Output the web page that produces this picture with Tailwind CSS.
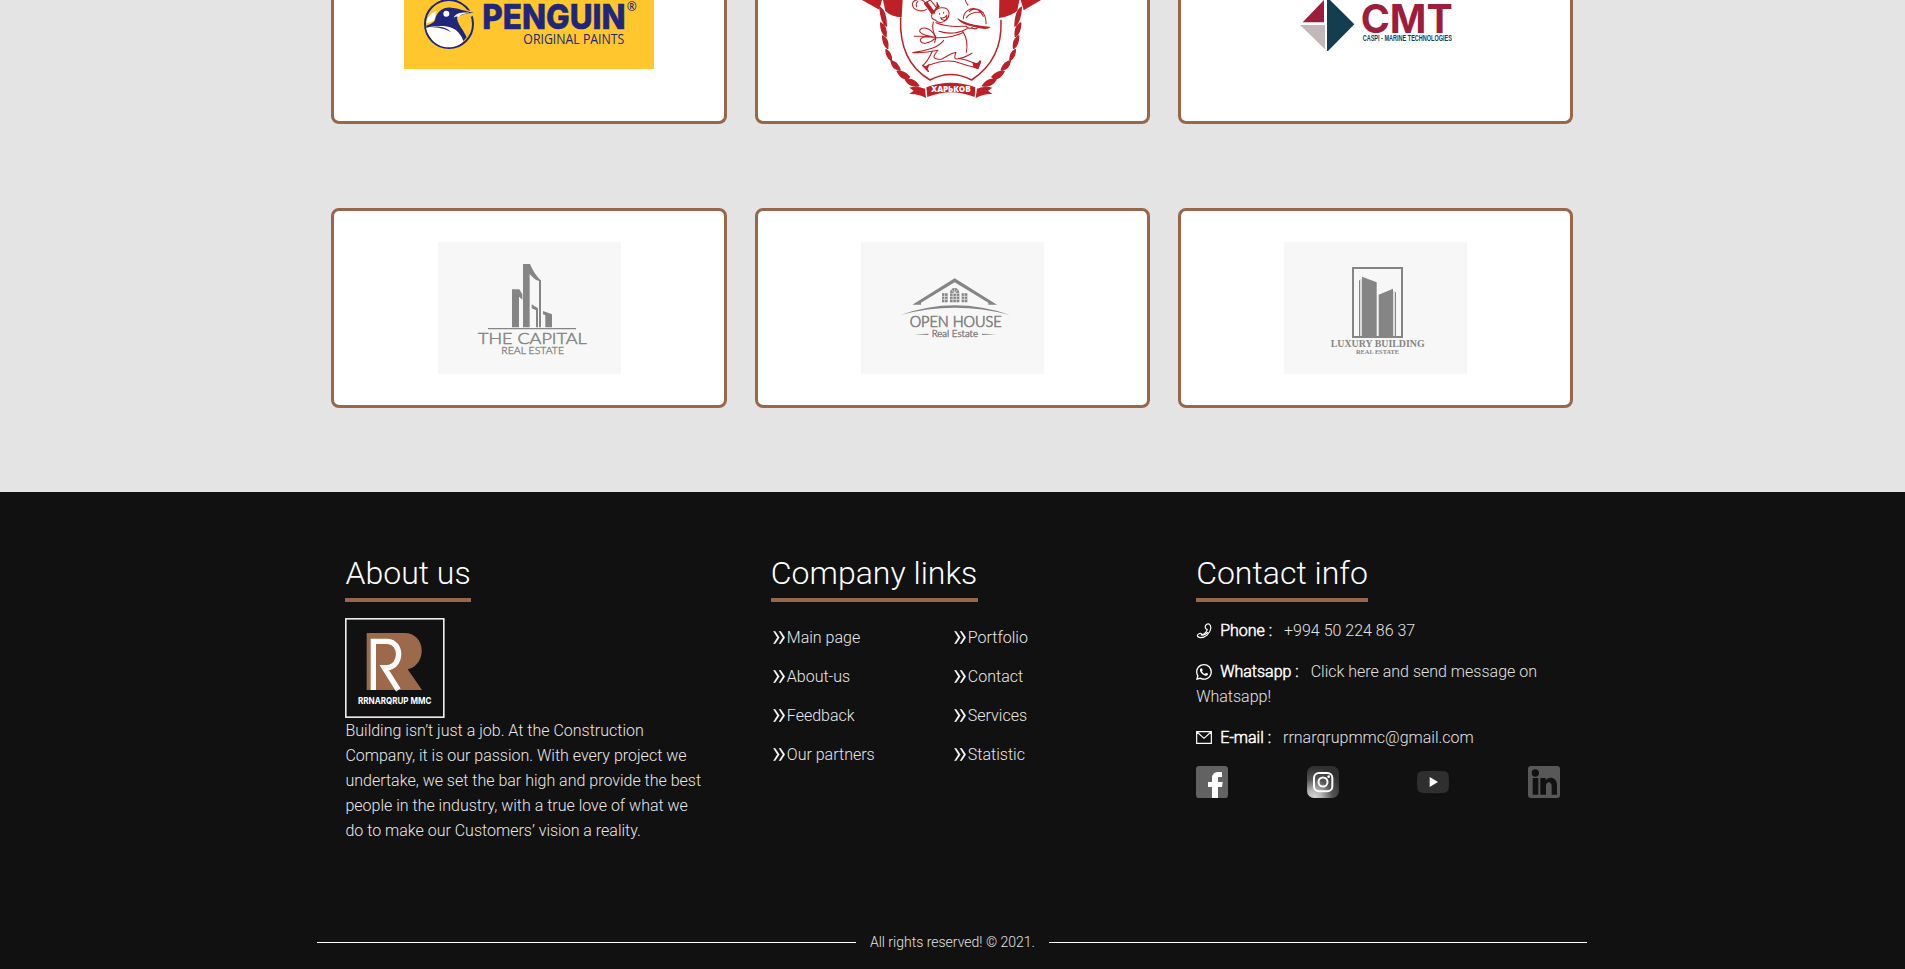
<!DOCTYPE html>
<html lang="en">
<head>
<meta charset="utf-8">
<title>Our partners</title>
<script src="https://cdn.jsdelivr.net/npm/@tailwindcss/browser@4"></script>
</head>
<body class="h-[969px] overflow-hidden bg-[#e4e4e4] font-['Roboto',sans-serif] font-light text-white">
<svg class="hidden">
  <symbol id="chev" viewBox="0 0 36 40"><path d="M1 1h5l13 19L6 39H1l12-19zM18 1h5l13 19-13 19h-5l12-19z" fill="#fff" stroke="#fff"/></symbol>
</svg>
<main class="ml-[317.4px] flex h-[492px] w-[1270px] flex-col gap-[84px]">
  <div class="grid h-[124px] grid-cols-3">
    <div class="mx-[14px] flex items-start justify-center rounded-b-lg border-3 border-t-0 border-[#98674b] bg-white">
      <svg class="h-[69px] w-[250px]" viewBox="252 0 750 207">
        <rect x="252" width="750" height="207" fill="#ffc62d"/>
        <circle cx="387" cy="72" r="72" fill="none" stroke="#20267b" stroke-width="6"/>
        <path d="M440 30L468 36 455 50 440 44z" fill="#ffc62d"/>
        <path d="M319 78C342 74 372 74 388 79C410 84 428 99 432 120C412 152 352 149 330 110C322 99 318 88 319 78z" fill="#fff"/>
        <path d="M319 77C320 77 342 70 345 60C350 34 370 21 393 23C412 24 426 31 462 38C440 40 421 43 411 53C412 72 430 88 440 112L430 123C420 94 400 80 370 78C350 77 334 78 319 84z" fill="#20267b"/>
        <path d="M319 70C321 52 331 40 350 32C346 40 348 52 341 61C334 67 326 68 319 70z" fill="#fff"/>
        <path d="M331 81C356 76 382 82 393 97C377 86 355 82 331 81z" fill="#20267b"/>
        <circle cx="379" cy="41" r="9" fill="#fff"/>
        <path d="M401 53C407 40 423 37 448 38C425 42 420 46 415 52C411 48 407 50 401 53z" fill="#fff"/>
        <text x="487" y="86" textLength="430" lengthAdjust="spacingAndGlyphs" font-family="Inter" font-weight="800" font-size="102" fill="#20267b" stroke="#20267b" stroke-width="1.5">PENGUIN</text>
        <text x="610" y="131" textLength="303" lengthAdjust="spacingAndGlyphs" font-family="Open Sans" font-weight="400" font-size="41" fill="#20267b">ORIGINAL PAINTS</text>
        <text x="920" y="32" textLength="30" lengthAdjust="spacingAndGlyphs" font-family="Open Sans" font-weight="600" font-size="36" fill="#20267b">®</text>
      </svg>
    </div>
    <div class="mx-[14px] flex items-start justify-center rounded-b-lg border-3 border-t-0 border-[#98674b] bg-white">
      <svg class="h-[100px] w-[184px]" viewBox="346 0 552 300" fill="none" stroke="#bd2026" stroke-width="3.5" stroke-linecap="round" stroke-linejoin="round">
        <defs>
          <path id="rope" d="M406 22Q424 34 425 78Q409 65 406 22zM408 69Q427 80 424 109Q409 100 408 69zM414 108Q433 120 429 145Q415 136 414 108zM424 149Q441 158 440 181Q424 171 424 149zM439 182Q458 186 466 209Q444 210 439 182zM458 214Q479 213 494 231Q474 244 458 214zM482 239Q506 233 522 257Q496 262 482 239z"/>
        </defs>
        <g fill="#bd2026" stroke="none">
          <path d="M352 0H412L404 29zM415 0H474L471 52Q440 50 422 33zM764 0H824L818 32Q798 49 763 54zM828 0H889L837 31z"/>
          <use href="#rope" stroke="#bd2026" stroke-width="4.5"/>
          <use href="#rope" stroke="#bd2026" stroke-width="4.5" transform="translate(1236 0) scale(-1 1)"/>
          <path d="M545 262Q618 235 692 262L690 291Q618 262 548 291zM494 263Q515 257 541 266L544 294Q521 281 494 282L507 272zM743 263Q722 257 697 266L693 294Q717 281 743 282L730 272z"/>
        </g>
        <path d="M468 54C465 120 480 195 556 240Q618 207 681 240C750 195 772 130 769 61" stroke-width="4.5"/>
        <g stroke-width="3.2">
          <path d="M546 28C530 38 503 30 503 12C506 -4 530 -5 540 6M540 10L557 0 578 26 562 41zM520 4Q512 10 516 20"/>
          <path d="M540 10L562 41 569 36 547 6z" fill="#bd2026"/>
          <path d="M577 7V20L564 40Q570 26 584 20Q577 14 577 7z" fill="#bd2026"/>
          <path d="M568 42C570 20 608 16 613 38C614 60 590 76 573 62M562 43Q556 57 574 61M585 40V43M597 37V40M588 53Q600 57 606 46Q608 60 598 61Q590 60 588 53z"/>
          <path d="M566 66Q560 90 574 112M574 68Q610 83 664 78M583 94Q626 108 667 86M664 78Q668 87 684 84"/>
          <path d="M509 109Q548 108 574 113Q622 114 654 98M573 112C558 78 525 79 525 94C528 106 552 107 574 113C557 130 529 136 527 121C527 109 555 110 573 112M574 113L570 127M597 121C578 147 540 151 504 158Q544 160 580 151"/>
          <path d="M654 94Q672 120 665 157M563 154Q547 188 534 197L551 214M578 153Q560 174 574 176C599 184 603 163 634 157Q625 178 637 177Q655 176 682 160M551 196Q611 173 647 190Q676 200 697 203M641 175Q668 179 690 190"/>
          <path d="M534 196L551 214 547 206 553 194 543 201zM685 188Q699 196 706 182L708 186 700 206 688 202z" fill="#bd2026"/>
          <path d="M640 57Q664 76 735 82Q725 89 693 80Q653 74 640 57z" fill="#bd2026"/>
          <path d="M656 56C657 14 726 13 724 71M665 53Q678 34 714 36M674 35Q687 19 716 38M685 25Q703 26 716 49M662 0Q664 10 670 15M680 83Q693 91 699 82"/>
        </g>
        <text x="560" y="277" textLength="118" lengthAdjust="spacingAndGlyphs" font-family="Open Sans" font-weight="800" font-size="25" fill="#fff" stroke="none">ХАРЬКОВ</text>
      </svg>
    </div>
    <div class="mx-[14px] flex items-start justify-center rounded-b-lg border-3 border-t-0 border-[#98674b] bg-white">
      <svg class="h-[52px] w-[155px]" viewBox="384 0 465 156">
        <path d="M462 0V67H398z" fill="#9c1d3c"/><path d="M390 75H465V148z" fill="#c2b8b9"/><path d="M471 0H480L553 73 474 153H471z" fill="#153d50"/>
        <text x="572" y="100" textLength="276" lengthAdjust="spacingAndGlyphs" font-family="Inter" font-weight="700" font-size="120" fill="#9c1d3c">CMT</text>
        <text x="578" y="123" textLength="268" lengthAdjust="spacingAndGlyphs" font-family="Liberation Sans" font-weight="700" font-size="25" fill="#153d50">CASPI - MARINE TECHNOLOGIES</text>
      </svg>
    </div>
  </div>
  <div class="grid h-[200px] grid-cols-3">
    <div class="mx-[14px] flex items-center justify-center rounded-lg border-3 border-[#98674b] bg-white">
      <svg class="h-[132px] w-[183px] bg-[#f7f7f7]" viewBox="354 126 549 396" fill="#858585">
        <path d="M576 268H598L607 283V299L597 290V382H576zM609 192H630C640 215 650 230 663 241V382H657V243C645 240 637 231 629 222V382H609zM635 313L654 325V382H648V331L635 325zM669 333L696 343V382H676V346L669 343zM504 384H768V388H504z"/>
        <text x="474" y="432" textLength="326" lengthAdjust="spacingAndGlyphs" font-family="Lato" font-size="48" stroke="#858585" stroke-width="1.6">THE CAPITAL</text>
        <text x="544" y="461" textLength="188" lengthAdjust="spacingAndGlyphs" font-family="Lato" font-size="28" stroke="#858585" stroke-width="1">REAL ESTATE</text>
      </svg>
    </div>
    <div class="mx-[14px] flex items-center justify-center rounded-lg border-3 border-[#98674b] bg-white">
      <svg class="h-[132px] w-[183px] bg-[#f7f7f7]" viewBox="348 126 549 396" fill="#858585">
        <path d="M502 314L629 235 756 314H730V308L629 247 528 308V314zM467 345Q629 287 794 345Q629 302 467 345zM508 403L550 401V405zM754 403L711 401V405zM591 280H608V307H591zM650 280H667V307H650zM615 307V280C615 259 643 259 643 280V307z"/>
        <path d="M599 280V307M591 289H608M591 298H608M658 280V307M650 289H667M650 298H667M615 280H643M615 289H643M615 298H643M624 280V307M634 280V307M629 280V265M629 280L619 268M629 280L639 268" stroke="#f7f7f7" stroke-width="2"/>
        <text x="494" y="380" textLength="276" lengthAdjust="spacingAndGlyphs" font-family="Lato" font-size="45" stroke="#858585" stroke-width="2.2">OPEN HOUSE</text>
        <text x="560" y="411" textLength="139" lengthAdjust="spacingAndGlyphs" font-family="Lato" font-size="29" stroke="#858585" stroke-width="1.4">Real Estate</text>
      </svg>
    </div>
    <div class="mx-[14px] flex items-center justify-center rounded-lg border-3 border-[#98674b] bg-white">
      <svg class="h-[132px] w-[183px] bg-[#f7f7f7]" viewBox="342 126 549 396" fill="#858585">
        <rect x="549" y="204" width="147" height="207" fill="none" stroke="#858585" stroke-width="6"/>
        <path d="M576 230L620 247V411H576zM626 284L669 266V411H626zM567 241H570V411H567zM675 277H678V411H675z"/>
        <path d="M571 237H575V408H571zM670 273H674V408H670z" fill="#d0d0d0"/>
        <text x="482" y="440" textLength="282" lengthAdjust="spacingAndGlyphs" font-family="Liberation Serif" font-weight="700" font-size="32">LUXURY BUILDING</text>
        <text x="558" y="463" textLength="129" lengthAdjust="spacingAndGlyphs" font-family="Liberation Serif" font-weight="700" font-size="21">REAL ESTATE</text>
      </svg>
    </div>
  </div>
</main>
<footer class="h-[477px] bg-[#111] pt-[60px]">
  <div class="ml-[345.45px] flex h-[374px] w-[1215px]">
    <section class="w-[425.4px]">
      <h2 class="mb-4 inline-block h-[50px] border-b-4 border-[#98674b] pr-[.4px] text-[32px] leading-[42px] whitespace-nowrap">About us</h2>
      <svg class="block h-[100px] w-[100px]" viewBox="0 0 300 300">
        <rect x="2.5" y="2.5" width="294" height="295" fill="none" stroke="#fff" stroke-width="4.5"/>
        <path d="M65 45H178C244 45 248 140 188 154L231 216H65z" fill="#9c6a4a"/>
        <path d="M85 216V70H128C172 72 172 147 126 149H118L160 216" fill="none" stroke="#fff" stroke-width="16"/>
        <text x="39" y="257" textLength="220" lengthAdjust="spacingAndGlyphs" font-family="Inter" font-weight="700" font-size="28" fill="#fff">RRNARQRUP MMC</text>
      </svg>
      <p class="w-[363px] text-base leading-[25px] whitespace-nowrap text-[#e8e8e8]">Building isn’t just a job. At the Construction<br>Company, it is our passion. With every project we<br>undertake, we set the bar high and provide the best<br>people in the industry, with a true love of what we<br>do to make our Customers’ vision a reality.</p>
    </section>
    <section class="w-[425.3px]">
      <h2 class="mb-4 inline-block h-[50px] border-b-4 border-[#98674b] pr-[.4px] text-[32px] leading-[42px] whitespace-nowrap">Company links</h2>
      <ul class="grid w-[362px] grid-cols-2 text-base leading-[39px] text-[#e8e8e8]">
        <li class="flex items-center"><svg class="mr-[2px] ml-[2px] h-[13px] w-3"><use href="#chev"/></svg>Main page</li>
        <li class="flex items-center"><svg class="mr-[2px] ml-[2px] h-[13px] w-3"><use href="#chev"/></svg>Portfolio</li>
        <li class="flex items-center"><svg class="mr-[2px] ml-[2px] h-[13px] w-3"><use href="#chev"/></svg>About-us</li>
        <li class="flex items-center"><svg class="mr-[2px] ml-[2px] h-[13px] w-3"><use href="#chev"/></svg>Contact</li>
        <li class="flex items-center"><svg class="mr-[2px] ml-[2px] h-[13px] w-3"><use href="#chev"/></svg>Feedback</li>
        <li class="flex items-center"><svg class="mr-[2px] ml-[2px] h-[13px] w-3"><use href="#chev"/></svg>Services</li>
        <li class="flex items-center"><svg class="mr-[2px] ml-[2px] h-[13px] w-3"><use href="#chev"/></svg>Our partners</li>
        <li class="flex items-center"><svg class="mr-[2px] ml-[2px] h-[13px] w-3"><use href="#chev"/></svg>Statistic</li>
      </ul>
    </section>
    <section class="w-[363px]">
      <h2 class="mb-4 inline-block h-[50px] border-b-4 border-[#98674b] text-[32px] leading-[42px] whitespace-nowrap">Contact info</h2>
      <div class="flex flex-col gap-4 text-base leading-[25px] text-[#e2e2e2]">
        <div class="flex items-center whitespace-nowrap">
          <svg class="mr-2 h-4 w-4" viewBox="0 0 48 48" fill="none" stroke="#fff" stroke-width="3.5" stroke-linejoin="round"><path d="M29 7Q33 1 39 3Q46 8 44 18C41 32 28 44 14 44Q5 43 4 38Q4 35 9 32Q13 29 17 33L20 36Q30 31 34 20L30 17Q26 14 29 7zM14 36Q28 38 36 27"/></svg>
          <span class="mr-3 text-white [-webkit-text-stroke:0.5px_white]">Phone :</span><span>+994 50 224 86 37</span>
        </div>
        <div>
          <div class="flex items-center whitespace-nowrap">
            <svg class="mr-2 h-4 w-4" viewBox="0 0 16 16" fill="#fff"><path d="M13.601 2.326A7.85 7.85 0 0 0 7.994 0C3.627 0 .068 3.558.064 7.926c0 1.399.366 2.76 1.057 3.965L0 16l4.204-1.102a7.9 7.9 0 0 0 3.79.965h.004c4.368 0 7.926-3.558 7.93-7.93A7.9 7.9 0 0 0 13.6 2.326zM7.994 14.521a6.6 6.6 0 0 1-3.356-.92l-.24-.144-2.494.654.666-2.433-.156-.251a6.56 6.56 0 0 1-1.007-3.505c0-3.626 2.957-6.584 6.591-6.584a6.56 6.56 0 0 1 4.66 1.931 6.56 6.56 0 0 1 1.928 4.66c-.004 3.639-2.961 6.592-6.592 6.592m3.615-4.934c-.197-.099-1.17-.578-1.353-.646-.182-.065-.315-.099-.445.099-.133.197-.513.646-.627.775-.114.133-.232.148-.43.05-.197-.1-.836-.308-1.592-.985-.59-.525-.985-1.175-1.103-1.372-.114-.198-.011-.304.088-.403.087-.088.197-.232.296-.346.1-.114.133-.198.198-.33.065-.134.034-.248-.015-.347-.05-.099-.445-1.076-.612-1.47-.16-.389-.323-.335-.445-.34-.114-.007-.247-.007-.38-.007a.73.73 0 0 0-.529.247c-.182.198-.691.677-.691 1.654s.71 1.916.81 2.049c.098.133 1.394 2.132 3.383 2.992.47.205.84.326 1.129.418.475.152.904.129 1.246.08.38-.058 1.171-.48 1.338-.943.164-.464.164-.86.114-.943-.049-.084-.182-.133-.38-.232"/></svg>
            <span class="mr-3 text-white [-webkit-text-stroke:0.5px_white]">Whatsapp :</span><span>Click here and send message on</span>
          </div>
          <div>Whatsapp!</div>
        </div>
        <div class="flex items-center whitespace-nowrap">
          <svg class="mr-2 h-4 w-4" viewBox="0 0 48 48" fill="none" stroke="#fff" stroke-width="3.5"><path d="M2 5H46V40H2zM3 6L24 25 45 6"/></svg>
          <span class="mr-3 text-white [-webkit-text-stroke:0.5px_white]">E-mail :</span><span>rrnarqrupmmc@gmail.com</span>
        </div>
      </div>
      <div class="mt-4 flex w-[363.5px] justify-between">
        <svg class="h-8 w-8" viewBox="0 0 96 96"><rect width="96" height="96" rx="10" fill="#626262"/><path d="M48 96V63H36V48H48V37C48 24 56 18 67 18H78V33H71C66 33 66 35 66 39V48H80L78 63H66V96z" fill="#fff"/></svg>
        <svg class="h-8 w-8" viewBox="0 0 96 96"><defs><radialGradient id="ig" cx=".22" cy=".98" r=".95"><stop offset="0" stop-color="#d6d6d6"/><stop offset=".25" stop-color="#b5b5b5"/><stop offset=".6" stop-color="#555"/><stop offset="1" stop-color="#303030"/></radialGradient></defs><rect width="96" height="96" rx="21" fill="url(#ig)"/><g fill="none" stroke="#fff" stroke-width="6"><rect x="21" y="21" width="55" height="55" rx="15"/><circle cx="48" cy="48" r="13.5"/></g><circle cx="65" cy="32" r="4" fill="#fff"/></svg>
        <svg class="h-8 w-8" viewBox="0 0 96 96"><path d="M14 16Q48 12 82 16Q94 17 95 29Q97 48 95 67Q94 79 82 80Q48 84 14 80Q2 79 1 67Q-1 48 1 29Q2 17 14 16z" fill="#2f2f2f"/><path d="M38 33L63 48 38 63z" fill="#fff"/></svg>
        <svg class="h-8 w-8" viewBox="0 0 96 96"><rect width="96" height="96" rx="9" fill="#585858"/><g fill="#111"><circle cx="22" cy="21" r="11"/><path d="M14 36H31V86H14zM37 36H53V43C61 31 87 32 87 57V86H71V60C71 46 54 45 54 60V86H37z"/></g></svg>
      </div>
    </section>
  </div>
  <div class="ml-[317.4px] flex w-[1270px] items-center text-sm leading-8 text-[#e2e2e2]">
    <div class="h-px flex-1 bg-white"></div><span class="mx-[14px]">All rights reserved! © 2021.</span><div class="h-px flex-1 bg-white"></div>
  </div>
</footer>
</body>
</html>
